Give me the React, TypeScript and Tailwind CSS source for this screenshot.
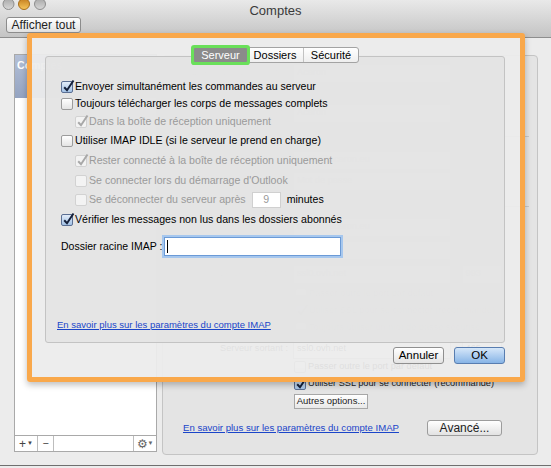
import React from 'react'

function Check({ checked = false, disabled = false }: { checked?: boolean; disabled?: boolean }) {
  const box = disabled
    ? 'border-[#d2d2d2] bg-[#f3f3f3]'
    : checked
      ? 'border-[#5b6f93] bg-gradient-to-b from-[#e2ecf8] to-[#a3c2e6]'
      : 'border-[#9c9c9c] bg-gradient-to-b from-white to-[#e4e4e4]'
  return (
    <span className={`relative inline-block w-[12px] h-[12px] shrink-0 rounded-[2px] border ${box}`}>
      {checked && (
        <svg className="absolute left-[0px] top-[-3px]" width="13" height="14" viewBox="0 0 13 14">
          <path
            d="M2.2 8.2 L5 11.2 L11.5 1.5"
            fill="none"
            stroke={disabled ? '#a8a8a8' : '#15203a'}
            strokeWidth="2"
          />
        </svg>
      )}
    </span>
  )
}

function Row({
  h,
  indent = false,
  checked = false,
  disabled = false,
  children,
}: {
  h: string
  indent?: boolean
  checked?: boolean
  disabled?: boolean
  children: React.ReactNode
}) {
  return (
    <div className={`flex items-center gap-[2px] whitespace-nowrap ${h} ${indent ? 'pl-[14px]' : ''}`}>
      <Check checked={checked} disabled={disabled} />
      <span className={disabled ? 'text-[#9a9a9a]' : 'text-black'}>{children}</span>
    </div>
  )
}

function Field({ label, value, extra }: { label: string; value: string; extra?: string }) {
  return (
    <div className="flex items-center h-[20px] whitespace-nowrap">
      <div className="w-[130px] text-right pr-[5px] text-[#333]">{label}</div>
      <div className="w-[158px] h-[19px] bg-white border border-[#b9b9b9] px-[3px] flex items-center">{value}</div>
      {extra && (
        <>
          <span className="px-[4px]">:</span>
          <div className="w-[40px] h-[19px] bg-white border border-[#b9b9b9] px-[3px] flex items-center">{extra}</div>
        </>
      )}
    </div>
  )
}

export default function App() {
  return (
    <div className="relative w-[551px] h-[468px] overflow-hidden bg-[#ececec] font-['Liberation_Sans',Arial,sans-serif] text-[10.6px] text-black">
      {/* Title bar + toolbar */}
      <div className="relative h-[38px] bg-gradient-to-b from-[#e9e9e9] to-[#c4c4c4] border-b border-[#8e8e8e]">
        <svg className="block ml-[2px]" width="48" height="11" viewBox="0 0 48 11">
          <defs>
            <linearGradient id="gr" x1="0" y1="0" x2="0" y2="1">
              <stop offset="0" stopColor="#a8a8a8" />
              <stop offset="1" stopColor="#d8d8d8" />
            </linearGradient>
            <linearGradient id="or" x1="0" y1="0" x2="0" y2="1">
              <stop offset="0" stopColor="#c47d1e" />
              <stop offset="1" stopColor="#f7c75c" />
            </linearGradient>
          </defs>
          <circle cx="6.5" cy="4" r="5.5" fill="url(#gr)" stroke="#8e8e8e" strokeWidth="1" />
          <circle cx="22" cy="4" r="5.5" fill="url(#or)" stroke="#a66d1c" strokeWidth="1" />
          <circle cx="38" cy="4" r="5.5" fill="url(#gr)" stroke="#8e8e8e" strokeWidth="1" />
        </svg>
        <div className="absolute left-0 right-0 top-[1px] text-center text-[13px] text-[#3a3a3a]">Comptes</div>
        <div className="ml-[6px] mt-[6px] w-[75px] h-[16px] rounded-[3px] border border-[#8c8c8c] bg-gradient-to-b from-white to-[#e2e2e2] text-[12px] flex items-center justify-center text-[#222]">
          Afficher tout
        </div>
      </div>

      {/* Window body */}
      <div className="flex h-[428px] border-b border-[#6f6f6f]">
        {/* Account list */}
        <div className="ml-[14px] mt-[16px] w-[143px] h-[398px] bg-white border border-[#a9a9a9] flex flex-col">
          <div className="h-[43px] bg-gradient-to-b from-[#b4c0d7] to-[#94a3c1] text-white font-bold px-[2px] pt-[3px]">
            Comptes
          </div>
          <div className="flex-1" />
          <div className="h-[16px] border-t border-[#a9a9a9] flex items-stretch text-[#444] bg-white">
            <div className="w-[23px] border-r border-[#bdbdbd] flex items-center justify-center text-[12px]">
              +<span className="text-[6px] ml-[1px]">▼</span>
            </div>
            <div className="w-[16px] border-r border-[#bdbdbd] flex items-center justify-center">−</div>
            <div className="flex-1 border-r border-[#bdbdbd]" />
            <div className="w-[22px] flex items-center justify-center text-[12px] text-[#666]">
              ⚙<span className="text-[6px]">▼</span>
            </div>
          </div>
        </div>

        {/* Account detail panel (mostly hidden behind the sheet) */}
        <div className="ml-[5px] mt-[17px] w-[376px] h-[400px] overflow-hidden bg-[#e4e4e4] border border-[#c4c4c4] rounded-[4px] flex flex-col text-[9.2px] text-[#333]">
          <div className="mt-[7px]">
            <Field label="Description du compte :" value="Acaron" />
          </div>
          <div className="mt-[20px]">
            <Field label="Nom complet :" value="Acaron" />
          </div>
          <div className="mt-[13px] h-px bg-[#c7c7c7] mx-[8px]" />
          <div className="mt-[13px]">
            <Field label="Adresse e-mail :" value="teddy@acaron.eu" />
          </div>
          <div className="mt-[1px]">
            <Field label="Méthode :" value="Mot de passe" />
          </div>
          <div className="mt-[15px] h-px bg-[#c7c7c7] mx-[8px]" />
          <div className="mt-[10px]">
            <Field label="Nom d'utilisateur :" value="teddy@acaron.eu" />
          </div>
          <div className="mt-[3px]">
            <Field label="Mot de passe :" value="••••••••" />
          </div>
          <div className="mt-[4px]">
            <Field label="Serveur entrant :" value="ssl0.ovh.net" extra="993" />
          </div>
          <div className="mt-[1px] pl-[132px]">
            <Row h="h-[17px]">Passer outre le port par défaut</Row>
            <Row h="h-[17px]" checked>Utiliser SSL pour se connecter (recommandé)</Row>
            <Row h="h-[17px]">Toujours utiliser un mot de passe sécurisé</Row>
          </div>
          <div className="mt-[3px]">
            <Field label="Serveur sortant :" value="ssl0.ovh.net" extra="465" />
          </div>
          <div className="-mt-[1px] pl-[131px]">
            <Row h="h-[17px]">Passer outre le port par défaut</Row>
            <Row h="h-[17px]" checked>
              <span className="text-[#222]">Utiliser SSL pour se connecter (recommandé)</span>
            </Row>
            <div className="mt-[2px] w-[74px] h-[15px] bg-gradient-to-b from-white to-[#e8e8e8] border border-[#a7a7a7] flex items-center justify-center whitespace-nowrap text-[9.5px] text-[#222]">
              Autres options...
            </div>
          </div>
          <div className="mt-[11px] flex items-center pl-[20px] pr-[35px] whitespace-nowrap">
            <span className="text-[9.6px] text-[#1a45c9] underline">En savoir plus sur les paramètres du compte IMAP</span>
            <div className="ml-auto w-[75px] h-[16px] rounded-[3px] bg-gradient-to-b from-white to-[#e2e2e2] border border-[#9c9c9c] flex items-center justify-center text-[12px] text-[#222]">
              Avancé...
            </div>
          </div>
        </div>
      </div>

      {/* Sheet with highlight frame */}
      <div className="absolute left-[27px] top-[33px] w-[498px] h-[349px] border-[5px] border-[#f9a84b] rounded-[3px] shadow-[0_3px_6px_rgba(0,0,0,0.25)]">
        <div className="w-full h-full bg-[#ececec]/[0.94] flex flex-col pl-[13px] pr-[15px] pt-[9px]">
          {/* Segmented tabs */}
          <div className="relative z-10 flex justify-center pl-[2px]">
            <div className="flex h-[16px] rounded-[3px] border border-[#a3a3a3] bg-gradient-to-b from-white to-[#eeeeee] text-[11px]">
              <div className="w-[53px] bg-[#8b8b8b] text-white flex items-center justify-center shadow-[0_0_0_3px_#6ae05a] rounded-[1px]">
                Serveur
              </div>
              <div className="w-[56px] flex items-center justify-center">Dossiers</div>
              <div className="w-[55px] border-l border-[#c2c2c2] flex items-center justify-center">Sécurité</div>
            </div>
          </div>

          {/* Tab panel */}
          <div className="-mt-[7px] h-[287px] border border-[#c3c3c3] rounded-[3px] bg-[#e3e3e3]/[0.9] flex flex-col pl-[15px] pt-[21px]">
            <Row h="h-[17px]" checked>Envoyer simultanément les commandes au serveur</Row>
            <Row h="h-[17px]">Toujours télécharger les corps de messages complets</Row>
            <Row h="h-[19px]" indent checked disabled>Dans la boîte de réception uniquement</Row>
            <Row h="h-[20px]">Utiliser IMAP IDLE (si le serveur le prend en charge)</Row>
            <Row h="h-[20px]" indent checked disabled>Rester connecté à la boîte de réception uniquement</Row>
            <Row h="h-[19px]" indent disabled>Se connecter lors du démarrage d'Outlook</Row>
            <div className="flex items-center h-[20px] pl-[14px] gap-[2px] whitespace-nowrap">
              <Check disabled />
              <span className="text-[#9a9a9a]">Se déconnecter du serveur après</span>
              <div className="ml-[4px] w-[29px] h-[16px] bg-white border border-[#d0d0d0] flex items-center justify-center text-[#9a9a9a]">
                9
              </div>
              <span className="ml-[4px]">minutes</span>
            </div>
            <Row h="h-[19px]" checked>Vérifier les messages non lus dans les dossiers abonnés</Row>

            <div className="mt-[8px] flex items-center h-[19px]">
              <span className="whitespace-nowrap text-[10.5px] shrink-0">Dossier racine IMAP :</span>
              <div className="ml-[2px] w-[177px] h-[19px] shrink-0 bg-white border border-[#6b9ad6] shadow-[0_0_0_2px_#a6c7ee] flex items-center pl-[2px]">
                <span className="w-px h-[13px] bg-black" />
              </div>
            </div>

            <div className="mt-auto pb-[9px] -ml-[4px] whitespace-nowrap">
              <span className="text-[9.5px] text-[#1a45c9] underline">En savoir plus sur les paramètres du compte IMAP</span>
            </div>
          </div>

          {/* Sheet buttons */}
          <div className="mt-[4px] flex justify-end gap-[10px]">
            <div className="w-[51px] h-[17px] rounded-[3px] border border-[#8f8f8f] bg-gradient-to-b from-white to-[#e4e4e4] flex items-center justify-center text-[11.5px]">
              Annuler
            </div>
            <div className="w-[51px] h-[17px] rounded-[3px] border border-[#587db0] bg-gradient-to-b from-[#d6e7f9] to-[#87b4e6] flex items-center justify-center text-[11.5px]">
              OK
            </div>
          </div>
        </div>
      </div>
    </div>
  )
}
